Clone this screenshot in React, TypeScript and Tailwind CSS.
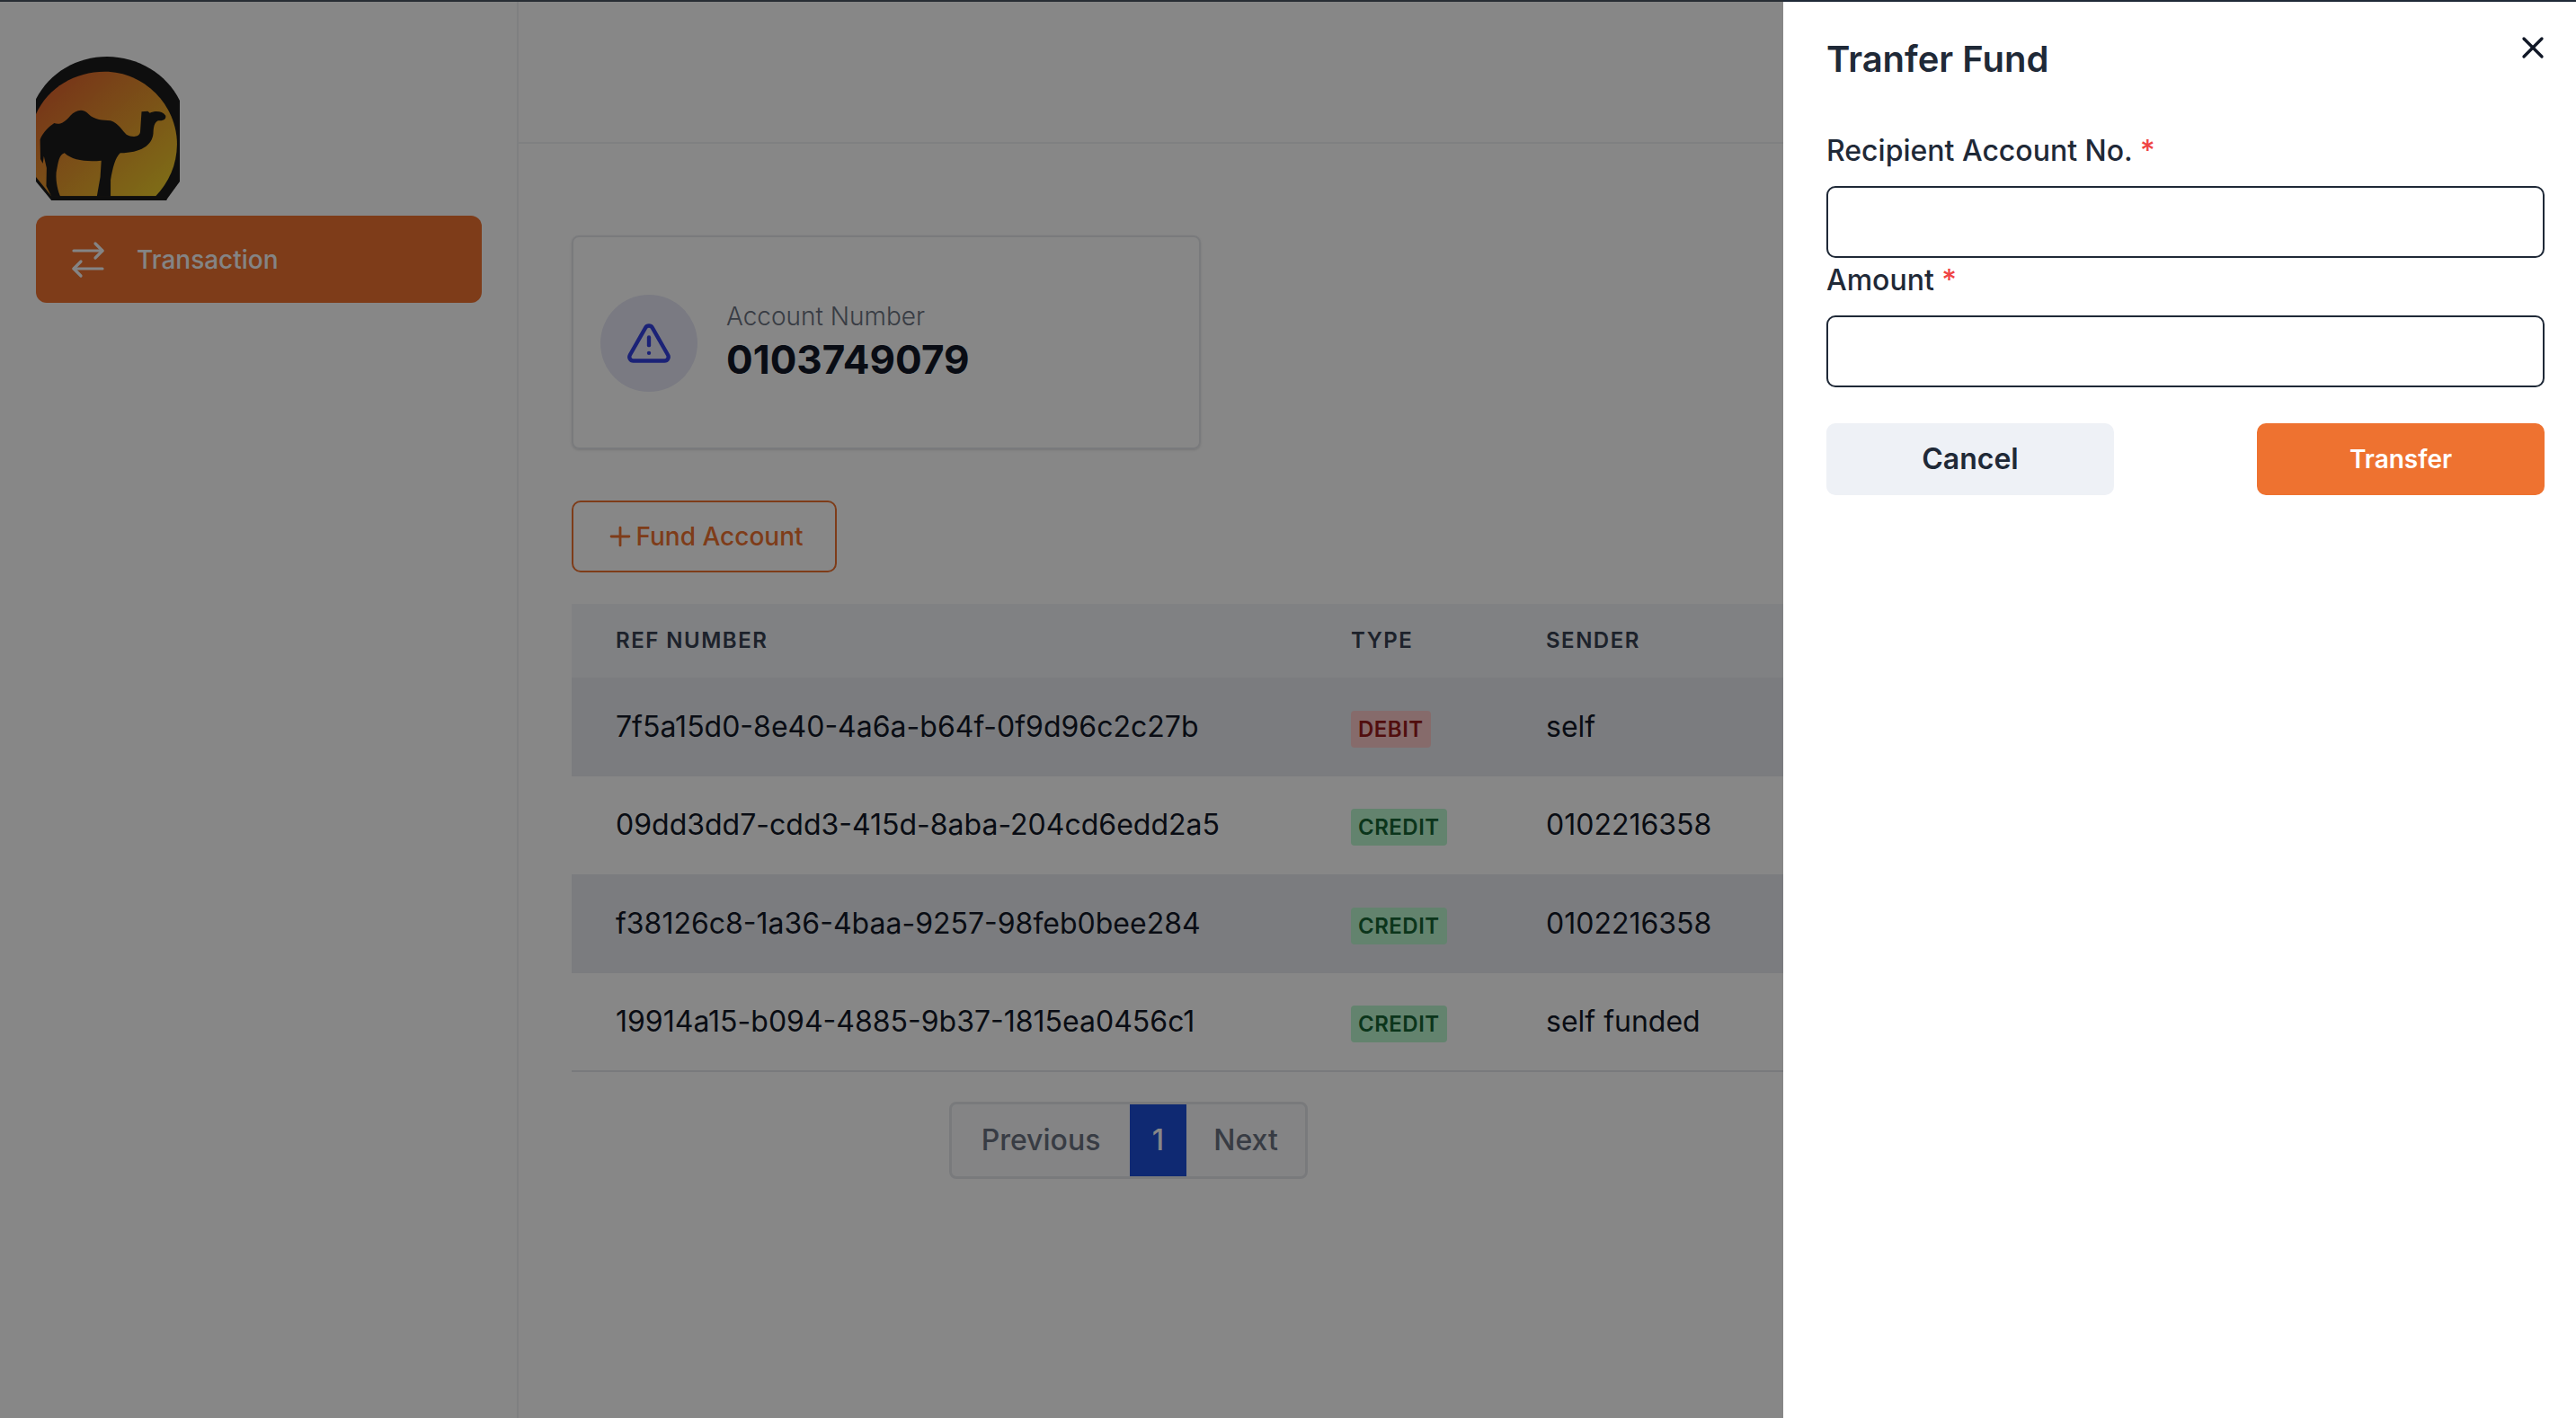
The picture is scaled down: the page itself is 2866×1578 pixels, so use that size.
import { FC } from "react";
import { ArrowRightLeft, Plus, TriangleAlert, X } from "lucide-react";

const rows = [
  { ref: "7f5a15d0-8e40-4a6a-b64f-0f9d96c2c27b", type: "DEBIT", sender: "self" },
  { ref: "09dd3dd7-cdd3-415d-8aba-204cd6edd2a5", type: "CREDIT", sender: "0102216358" },
  { ref: "f38126c8-1a36-4baa-9257-98feb0bee284", type: "CREDIT", sender: "0102216358" },
  { ref: "19914a15-b094-4885-9b37-1815ea0456c1", type: "CREDIT", sender: "self funded" },
];

const Logo: FC = () => (
  <svg viewBox="105 188 418 480" preserveAspectRatio="none" className="w-[160px] h-[160px] block">
    <defs>
      <linearGradient id="sun" x1="0" y1="0" x2="1" y2="1">
        <stop offset="0" stopColor="#e0592f" />
        <stop offset="1" stopColor="#f0d52c" />
      </linearGradient>
    </defs>
    <path d="M105 330 C145 240 225 188 312 188 C400 188 485 245 523 335 L523 605 L485 665 L150 668 L105 605 Z" fill="#1c1c1c" />
    <path d="M105 380 C140 290 220 238 305 238 C420 238 515 350 515 480 C515 550 490 610 453 654 L150 654 L105 590 Z" fill="url(#sun)" />
    <path d="M412 372 L430 370 L436 376 C450 368 472 368 482 385 C484 398 474 402 460 402 C448 408 447 425 446 445 C442 485 410 508 350 510 C335 525 328 560 322 600 L322 655 L282 655 L292 590 L295 535 C255 540 210 535 188 510 C172 515 170 540 164 575 C162 610 170 640 176 655 L150 655 L135 620 L136 560 L128 520 L125 545 L118 530 L117 465 C125 440 145 420 158 410 C175 418 190 405 205 385 C220 368 240 358 258 380 C275 400 300 400 322 402 C345 410 355 435 368 448 C385 458 405 458 408 440 Z" fill="#1c1c1c" />
    <rect x="150" y="654" width="335" height="14" fill="#1c1c1c" />
  </svg>
);

export default function App() {
  return (
    <div className="relative h-screen w-full overflow-hidden bg-white font-['Inter',sans-serif] text-[#111827]">
      <div className="flex h-full border-t-[2px] border-[#4b5563]">
        <aside className="w-[577px] shrink-0 border-r-2 border-[#f0f1f3] px-10 pt-[61px]">
          <Logo />
          <div className="mt-[17px] flex h-[97px] w-[496px] items-center rounded-[12px] bg-[#ee7230] pl-[34px] text-[#f9fafb]">
            <ArrowRightLeft className="h-[48px] w-[48px]" strokeWidth={1.6} />
            <span className="ml-[30px] text-[28px] font-medium">Transaction</span>
          </div>
        </aside>
        <main className="flex-1 min-w-0">
          <div className="h-[158px] border-b-2 border-[#f0f1f3]" />
          <div className="pl-[59px] pt-[102px]">
            <div className="flex h-[238px] w-[700px] items-start rounded-[8px] border-2 border-[#e5e7eb] pl-[30px] pt-[64px] shadow-sm">
              <div className="flex h-[108px] w-[108px] items-center justify-center rounded-full bg-[#e6e7f5]">
                <TriangleAlert className="h-[52px] w-[52px] text-[#3340e0]" strokeWidth={2} />
              </div>
              <div className="ml-[32px] pt-[6px]">
                <div className="text-[28px] font-light leading-[36px] text-[#6b7280]">Account Number</div>
                <div className="mt-[4px] text-[44px] font-bold leading-[52px]">0103749079</div>
              </div>
            </div>
            <div className="mt-[57px] flex h-[80px] w-[295px] items-center justify-center rounded-[10px] border-2 border-[#ee7230] text-[28px] font-medium text-[#ee7230]">
              <Plus className="h-[34px] w-[34px]" strokeWidth={2} />
              <span>Fund Account</span>
            </div>
            <table className="mt-[35px] w-full table-fixed border-collapse text-left">
              <colgroup>
                <col className="w-[867px]" />
                <col className="w-[217px]" />
                <col />
              </colgroup>
              <thead className="bg-[#f1f4f8]">
                <tr className="h-[82px] text-[24px] font-semibold tracking-[1.5px] text-[#374151]">
                  <th className="pl-[49px] font-semibold">REF NUMBER</th>
                  <th className="font-semibold">TYPE</th>
                  <th className="font-semibold">SENDER</th>
                </tr>
              </thead>
              <tbody className="text-[32px] text-[#111827]">
                {rows.map((row, i) => (
                  <tr key={row.ref} className={`h-[109.5px] ${i % 2 === 0 ? "bg-[#e8ebf0]" : "bg-white"} ${i === 3 ? "border-b-2 border-[#e5e7eb]" : ""}`}>
                    <td className="pl-[49px]">{row.ref}</td>
                    <td>
                      <span
                        className={`inline-block rounded-[4px] px-2 text-[24px] font-semibold leading-[41px] tracking-[0.5px] ${
                          row.type === "DEBIT" ? "bg-[#fecaca] text-[#991b1b]" : "bg-[#bbf7d0] text-[#166534]"
                        }`}
                      >
                        {row.type}
                      </span>
                    </td>
                    <td>{row.sender}</td>
                  </tr>
                ))}
              </tbody>
            </table>
            <div className="mt-[33px] ml-[420px] flex h-[86px] w-[399px] items-center rounded-[8px] border-[3px] border-[#e5e7eb] bg-[#f9fafb] text-[32px] font-medium text-[#6b7280]">
              <span className="w-[198px] text-center">Previous</span>
              <span className="flex h-full w-[63px] items-center justify-center bg-[#1d4ed8] text-white">1</span>
              <span className="flex-1 text-center">Next</span>
            </div>
          </div>
        </main>
      </div>

      <div className="absolute inset-0 bg-black/[0.47]" />

      <div className="absolute inset-y-0 right-0 w-[882px] border-t-[2px] border-[#1f2937] bg-white pl-[48px] pr-[35px]">
        <X className="absolute right-[28px] top-[31px] h-[40px] w-[40px] text-[#111827]" strokeWidth={2} />
        <div className="flex h-[141px] items-start pt-[40px] text-[40px] font-semibold leading-[48px] text-[#1f2937]">Tranfer Fund</div>
        <div className="mb-[14px] text-[32px] font-medium leading-[50px] text-[#1f2937]">
          Recipient Account No. <span className="text-[#ef4444]">*</span>
        </div>
        <div className="h-[80px] rounded-[10px] border-2 border-[#1f2937]" />
        <div className="mb-[14px] text-[32px] font-medium leading-[50px] text-[#1f2937]">
          Amount <span className="text-[#ef4444]">*</span>
        </div>
        <div className="h-[80px] rounded-[10px] border-2 border-[#1f2937]" />
        <div className="mt-[40px] flex justify-between">
          <div className="flex h-[80px] w-[320px] items-center justify-center rounded-[10px] bg-[#eef1f6] text-[32px] font-semibold text-[#1f2937]">Cancel</div>
          <div className="flex h-[80px] w-[320px] items-center justify-center rounded-[10px] bg-[#ee7230] text-[28px] font-semibold text-white">Transfer</div>
        </div>
      </div>
    </div>
  );
}
